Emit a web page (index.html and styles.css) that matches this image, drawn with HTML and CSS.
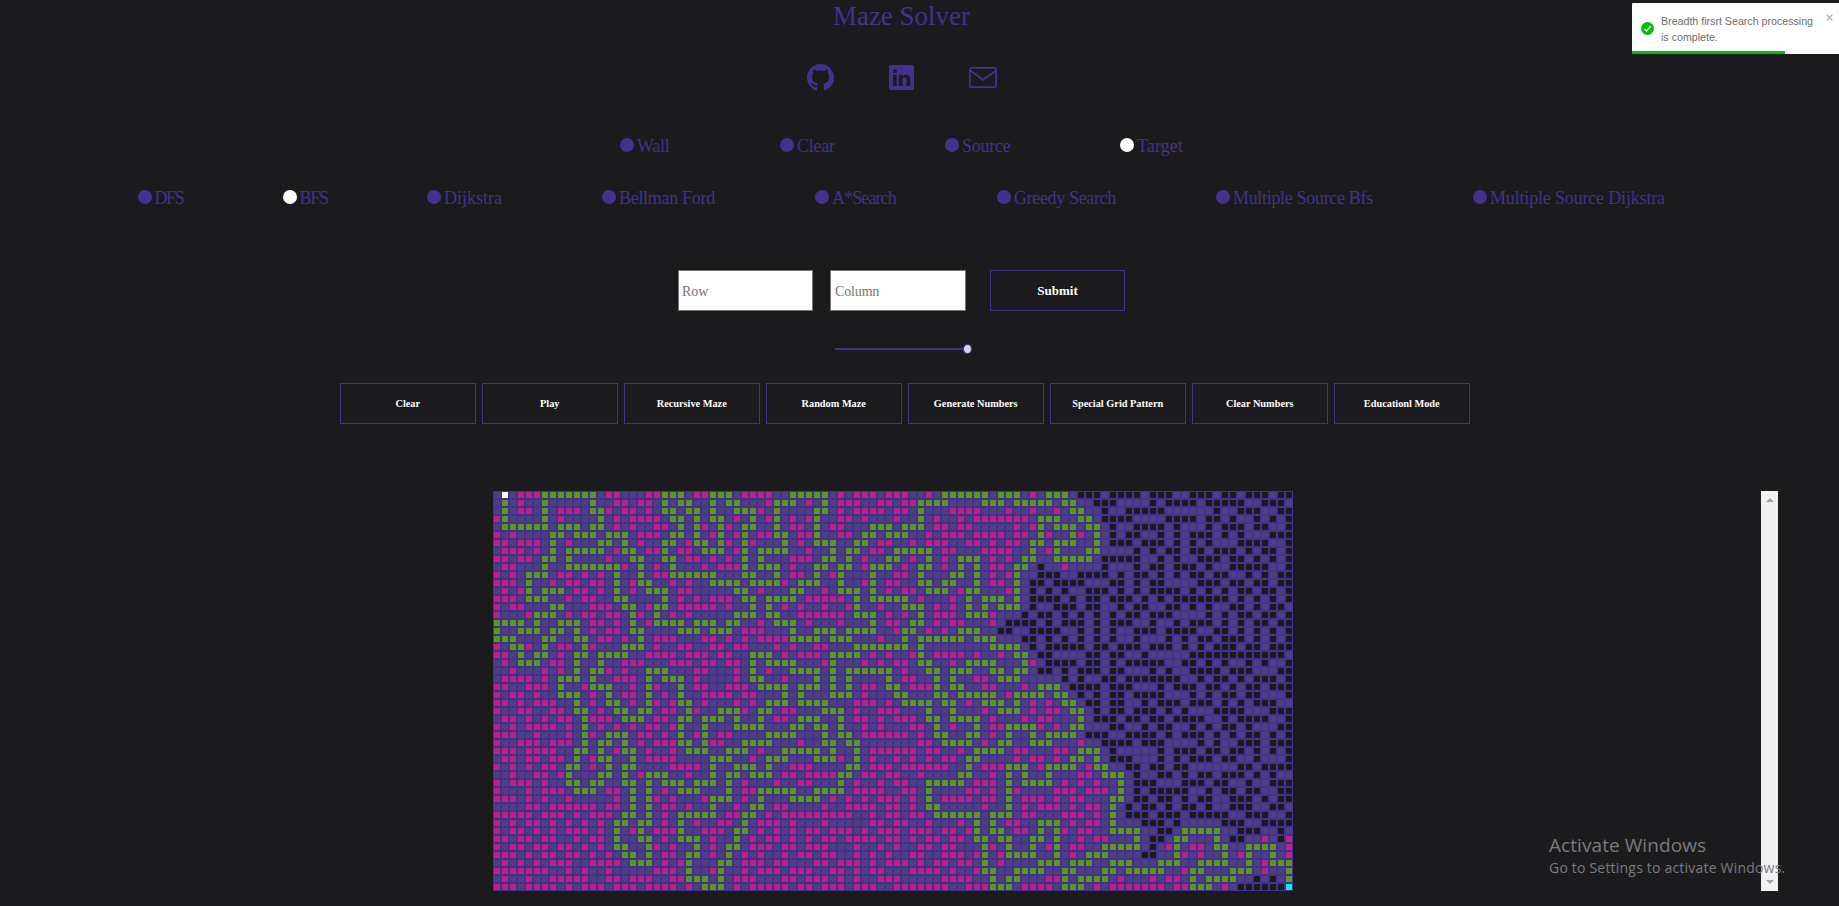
FILE: index.html
```html
<!DOCTYPE html>
<html lang="en">
<head>
<meta charset="utf-8">
<title>Maze Solver</title>
<link rel="stylesheet" href="styles.css">
</head>
<body>
<header class="header">
  <h1 class="title">Maze Solver</h1>
  <nav class="links">
    <a><svg class="icon github" viewBox="0 0 16 16"><path fill="currentColor" d="M8 0C3.58 0 0 3.58 0 8c0 3.54 2.29 6.53 5.47 7.59.4.07.55-.17.55-.38 0-.19-.01-.82-.01-1.49-2.01.37-2.53-.49-2.69-.94-.09-.23-.48-.94-.82-1.13-.28-.15-.68-.52-.01-.53.63-.01 1.08.58 1.23.82.72 1.21 1.87.87 2.33.66.07-.52.28-.87.51-1.07-1.78-.2-3.64-.89-3.64-3.95 0-.87.31-1.59.82-2.15-.08-.2-.36-1.02.08-2.12 0 0 .67-.21 2.2.82.64-.18 1.32-.27 2-.27s1.36.09 2 .27c1.53-1.04 2.2-.82 2.2-.82.44 1.1.16 1.92.08 2.12.51.56.82 1.27.82 2.15 0 3.07-1.87 3.75-3.65 3.95.29.25.54.73.54 1.48 0 1.07-.01 1.93-.01 2.2 0 .21.15.46.55.38A8.01 8.01 0 0 0 16 8c0-4.42-3.58-8-8-8z"/></svg></a>
    <a><svg class="icon linkedin" viewBox="0 0 16 16"><path fill="currentColor" d="M0 1.15C0 .51.53 0 1.18 0h13.64C15.47 0 16 .51 16 1.15v13.7c0 .63-.53 1.15-1.18 1.15H1.18C.53 16 0 15.48 0 14.85V1.15zm4.94 12.24V6.17h-2.4v7.22h2.4zM3.74 5.18c.84 0 1.36-.55 1.36-1.25-.02-.71-.52-1.25-1.34-1.25-.82 0-1.36.54-1.36 1.25 0 .7.52 1.25 1.33 1.25h.01zm4.91 8.21V9.36c0-.22.02-.43.08-.59.17-.43.57-.88 1.23-.88.87 0 1.22.66 1.22 1.64v3.86h2.4V9.25c0-2.22-1.18-3.25-2.76-3.25-1.28 0-1.85.7-2.17 1.19V6.17h-2.4c.03.68 0 7.22 0 7.22h2.4z"/></svg></a>
    <a><svg class="icon mail" viewBox="0 0 28 21"><g fill="none" stroke="currentColor" stroke-width="1.8"><rect x=".9" y=".9" width="26.2" height="19.2" rx="1.6"/><path d="M1.2 3.6 14 12.8 26.8 3.6"/></g></svg></a>
  </nav>
</header>

<div class="radios tools">
  <label class="radio"><i class="dot"></i><span>Wall</span></label>
  <label class="radio"><i class="dot"></i><span>Clear</span></label>
  <label class="radio"><i class="dot"></i><span>Source</span></label>
  <label class="radio"><i class="dot on"></i><span>Target</span></label>
</div>
<div class="radios algos">
  <label class="radio"><i class="dot"></i><span>DFS</span></label>
  <label class="radio"><i class="dot on"></i><span>BFS</span></label>
  <label class="radio"><i class="dot"></i><span>Dijkstra</span></label>
  <label class="radio"><i class="dot"></i><span>Bellman Ford</span></label>
  <label class="radio"><i class="dot"></i><span>A*Search</span></label>
  <label class="radio"><i class="dot"></i><span>Greedy Search</span></label>
  <label class="radio"><i class="dot"></i><span>Multiple Source Bfs</span></label>
  <label class="radio"><i class="dot"></i><span>Multiple Source Dijkstra</span></label>
</div>

<form class="size">
  <input class="field" placeholder="Row">
  <input class="field second" placeholder="Column">
  <button class="btn submit" type="button">Submit</button>
</form>
<div class="slider"><div class="track"></div><div class="thumb"></div></div>
<div class="actions">
  <button class="btn">Clear</button>
  <button class="btn">Play</button>
  <button class="btn">Recursive Maze</button>
  <button class="btn">Random Maze</button>
  <button class="btn">Generate Numbers</button>
  <button class="btn">Special Grid Pattern</button>
  <button class="btn">Clear Numbers</button>
  <button class="btn">Educationl Mode</button>
</div>

<main class="board">
  <div class="maze" id="maze"></div>
  <div class="scrollbar"><i class="up"></i><i class="down"></i></div>
</main>

<aside class="toast">
  <div class="toast-body">
    <svg class="check" viewBox="0 0 13 13"><circle cx="6.5" cy="6.5" r="6.5" fill="#07bc0c"/><path d="M3.4 6.9 5.6 9 9.7 4.2" fill="none" stroke="#fff" stroke-width="1.3"/></svg>
    <p class="message">Breadth firsrt Search processing<br>is complete.</p>
    <svg class="close" viewBox="0 0 7 7"><path d="M.6.6 6.4 6.4M6.4.6.6 6.4" stroke="#a5a5a5" stroke-width="1.1"/></svg>
  </div>
  <div class="progress"></div>
</aside>

<div class="watermark">
  <div class="wm-title">Activate Windows</div>
  <div class="wm-text">Go to Settings to activate Windows.</div>
</div>
<script src="maze.js"></script>
</body>
</html>
```

FILE: styles.css
```css
* { box-sizing: border-box; }
body {
  margin: 0;
  width: 1839px;
  height: 906px;
  overflow: hidden;
  background: #1b1b1d;
  color: #44318d;
  font-family: "Liberation Serif", serif;
  display: flex;
  flex-direction: column;
}
.header { display: flex; flex-direction: column; align-items: center; padding-right: 36px; }
.title { margin: 0; font-size: 27px; font-weight: 400; line-height: 32px; height: 32px; }
.links { display: flex; align-items: center; gap: 53px; height: 30px; margin-top: 30px; margin-bottom: 1px; }
.links a { display: flex; justify-content: center; width: 28px; }
.icon { display: block; }
.github { width: 27px; height: 27px; }
.linkedin { width: 25px; height: 25px; }
.mail { width: 28px; height: 21px; }

.radios { display: flex; height: 24px; }
.radio { display: flex; align-items: center; gap: 3px; font-size: 18px; line-height: 24px; white-space: nowrap; letter-spacing: -.25px; }
.dot { flex: none; width: 14px; height: 14px; border-radius: 50%; background: #44318d; position: relative; top: -1px; }
.dot.on { background: #fff; }
.tools { margin: 41px 0 0 620px; }
.tools .radio:nth-child(1) { width: 160px; }
.tools .radio:nth-child(2) { width: 165px; }
.tools .radio:nth-child(3) { width: 175px; }
.tools .radio:nth-child(4) { letter-spacing: .1px; }
.algos { margin: 28px 0 0 137.5px; }
.algos .radio:nth-child(1) { width: 145px; letter-spacing: -1.4px; }
.algos .radio:nth-child(2) { width: 144.5px; letter-spacing: -1.3px; }
.algos .radio:nth-child(3) { width: 175px; letter-spacing: 0; }
.algos .radio:nth-child(4) { width: 213px; letter-spacing: -.3px; }
.algos .radio:nth-child(5) { width: 182px; letter-spacing: -.9px; }
.algos .radio:nth-child(6) { width: 219px; letter-spacing: -.35px; }
.algos .radio:nth-child(7) { width: 257px; letter-spacing: -.32px; }
.algos .radio:nth-child(8) { letter-spacing: -.17px; }

.size { display: flex; margin: 60px 0 0 678px; height: 41px; }
.field {
  width: 135px;
  height: 41px;
  border: 1px solid #767676;
  border-radius: 0;
  padding: 3px 3px 0;
  font: 14px "Liberation Serif", serif;
  background: #fff;
}
.field::placeholder { color: #757575; }
.second { width: 136px; margin-left: 17px; padding-left: 4px; letter-spacing: -.15px; }
.btn {
  height: 41px;
  width: 135.5px;
  padding: 0;
  border: 1px solid #44318d;
  background: #1b1b1d;
  color: #fff;
  font: bold 10.3px "Liberation Serif", serif;
}
.submit { width: 135px; margin-left: 24px; font-size: 13px; }
.slider { display: flex; align-items: center; height: 12px; margin: 32px 0 0 835px; }
.track { width: 128px; height: 2px; background: #44318d; }
.thumb { width: 9px; height: 10px; border-radius: 50%; background: #d6d1e6; border: 1px solid #44318d; }
.actions { display: flex; gap: 6.5px; margin: 28px 0 0 340px; }

.board { display: flex; margin: 67px 0 0 493px; }
.maze { display: grid; grid-template-columns: repeat(100, 8px); grid-auto-rows: 8px; width: 800px; height: 400px; }
.cell { border: 1px solid #44318d; }
.wall { background: #4c4080; }
.seen { background: #b82383; }
.path { background: #58991b; }
.start { background: #fff; }
.goal { background: #00f6ff; }
.scrollbar {
  display: flex;
  flex-direction: column;
  justify-content: space-between;
  align-items: center;
  width: 17px;
  height: 400px;
  margin-left: 468px;
  padding: 7px 0;
  background: #f1f1f1;
}
.up, .down { border: 4px solid transparent; }
.up { border-top: 0; border-bottom-color: #a3a3a3; }
.down { border-bottom: 0; border-top-color: #a3a3a3; }

.toast { position: absolute; left: 1632px; top: 3px; width: 207px; height: 51px; background: #fff; border-radius: 1px 0 0 1px; }
.toast-body { display: flex; height: 48px; padding: 10px 6px 0 9px; }
.check { width: 13px; height: 13px; margin: 9px 7px 0 0; flex: none; }
.message { margin: 0; flex: 1; font: 10.65px/16px "Liberation Sans", sans-serif; color: #6c6c6c; white-space: nowrap; }
.close { width: 7px; height: 7px; margin-top: 1px; flex: none; }
.progress { width: 153px; height: 3px; background: #07bc0c; }

.watermark { position: absolute; left: 1549px; top: 832px; color: #7c7c7d; font-family: "Open Sans", sans-serif; white-space: nowrap; }
.wm-title { font-size: 19px; line-height: 26px; letter-spacing: .07px; }
.wm-text { font-size: 14px; line-height: 20px; letter-spacing: .2px; }
```

FILE: maze.js
```js
// Four column blocks of 25 cells per row.
// S start, T target, G path, P visited, K open, . wall
const rows = `
.S.PPPGGGGGGG.PP...PPGGG. PPGGG.PPPP..GGGGG.P.PPP.P PP..P.GGGGGG.GGG.P.GGG.KK K.KKKK.KKK..KKK.KK.KKK.KK
.G.P..G.....G..PP.PP.G.GG ..G.GG...PGGG.P.G.PPP..PP .PPGGGG....GGG.GGGGG.GG.. KKK....K.KKKK.KKKKK..KKK.
.G.PP.G.PPP.GGP.PP.P.GG.G G.G..GGGP.G....GG.P.PPPP. PP.G...PPPP...P..P..P.GG. .K..KKKKK......K..KKK..KK
PG....G.P....G.P.PPPP.GG. G.GG.P.G.PG.P.PG..PP.P... P..G.P..P.PPPPPPP.GGG..GG .KKKK....KKKK.KK.K..K.K.K
.GGGGGG.GGG.GG.P.P..PP.G. GP.GP.GG..G.PP.G.PP...GGG .GGG.PP.PP.....P.PG.GGG.G G.K..KKKK.K...K.KKK.KK..K
P.P....GG.GGG.GGG.PPP.GG. G.PG.PG.PPGG.PPG..PP.GG.G GG..P.PPP.PPPP.PP.GP..GP. G.K.KK..K.K.KKK.K.K...KKK
PP.PPP.G.P...GG.G.P..GG.P GG.GP.GP...G.P.GGG..GG.PP ..P.PPP..PP.P.PP.GG.GGG.. G.KKK.KKK.K.K.K...KKKK..K
.PPP.P.G.GGGGG.PGG.PPG.PP .GGG.PG.GGGG..P..G.GG.PP. GGGGG.PP...PPPP..G.PG...G G....K.K.KK.KK.KKK.K.KK.K
PP.PP.GG.G....P..GG..GG.P P.P.P.G.G...PPP.GG.G.P..G G.P.G.P.GGG.P.P.GG..GGGGG .KKKKK..K.K..KKK.KK.K.K.K
.PP...G..GGGGGGGP.G.P.G.. .P.PPPG.GGG.P..GG.GG.PGGG .P.GG.P.G.G.PP.GG.K..P... .K...K.KK.KKK.K..KKKKK..K
P.P.GGG.PP.P.P.G..G.PPGGG GGG...GG..G.PP.G.PG...G.. PP.G...GG.G.P.PG..KKK..KK KK.K.KK.K.K.KK.KK..K.K.KK
PPP.G..P.PP.PP.G.PGG..P.P ..GGGG.GGGGP.GGG..G..PG.P P..GG.GG..G.PP.G.KK.KKKK. ..KK.K.KK....KKK.KK.KK.KK
.P.PG.GGG.PP.P.G.P.GGG.PP .....GG.P...GG..P.GGG.G.P .PP.GGG.PGG...PG.K.K.K..K KK.K.K.KKKK.K.K.K.KK.KK.K
PPP.GGG..P.PP..GG....G.P. P.PPP.GG.GGGG.PPPPP.G.GGG GG.P...P.G.GGG.G.KKKK.K.K K.KKK.K.K.KKKKKKK.K.K.K.K
P.PP...GG...PPP.GG.PGG.PP PPP.P..G.G.P.P..P..PG..P. .GGG.P.P.G.G.GGG.K..KKK.K K..K.KK..KK.K.K..KK.K.KK.
P...PGGG.P.PP.PP.GP.G.P.P .....GGG.GG..PPPPPP.GGG.P .P.G.PPP.GGGP...K.KK.K.K. K.K.KK.KKK....K.K.KK.KK.K
GGGG.G..GGG.PP.P.G.PGGGG. GGG.GG..P.GGG.P...P...G.P P.GG.P.PP...P.KKKK.K.KKK. K.KKK..K..K.KKK.K.K.KK.KK
G..GGG.GG.G.P.PP.GG....GG G.GGG.PPP...G..GGG.GGGG.. PGG.P.P.GGG..KK..KKKK..K. K.K..KKK.KKKK..KK.K.K.K.K
GGG...GG..GG.PP.P.G.PPP.. .PP.P.P.PPPPGGGG.GGG...P. .G.GGGGGG.GGG...KK.K.K.K. K.K..K...K.K.KK.KKK.K.K.K
P.GGP.G.PP.GP...GGG.P..PP ..PP.PP...P.P..PP...GGGGG GG.G........GGGG.K.KKKKK. KK.KKK.KKK.K.K.KKK.KK.KKK
PP.G.GG.P.GG.GGGG..PPPP.P PP.PP..GGG.P.PPP.GGGG.P.P ..PG.PPPP.P..P.GG.KK....K K.KK..K.....KKKKKKKKKKKK.
.P.GGG.PP.G..G..PPP...PPP .PP.PP.G.GGGG...PG...P.P. PP.GG..P.GGGG...GP.KKKK.K K.K.KKKKK..KK.K.K..K.K..K
..P...P.P.G.GGP.P..GGG... PP...P.G.P..GGGG.G.GGGGGG .P..GG.GGG..GG.GG.KK.K.KK K.KK...K.K..KKKK.KKK...KK
.PPPP.P.GGG.G..PPP.G.GGG. P....P.GG..P...G.G.G....G .PP..G.G..PP.GGG.....K.K. .KK.KKKKKKK..K.KK.K.KKK.K
PP..PPP.G..PGGG..P.GP..G. PP..PPP.GGGG.GGG.G.G.PP.G G.PPPG.GG..PP...P.GGG.KKK K.KKK...K.KKK.KK.K.KK.KKK
P.PP.P..GGG.P.G.PP.G.P.G. .PPPP.PP...G.G...GGG.P... GG...GG.GGGGG.PGGGG.GG.K. K.KK.KKKK...K.K.KK.KK...K
PP.P.PPP..G.P.GG.P.GP.PGG .P...P.P.GGG.GGGG...PPP.P .GGGG.GG.P.GGG.G.P.P.GG.K K.KK..K.KKK.KKK.K.K.KKK..
P..PP..PP.GG.P.GG.GG.PP.G P..GGGP.GG.PP...GGG.P..PP P...G..G...P.GGG.P.PP.GG. K.KK.KKK.K.K...KKKK...KKK
.PP.P.P.PP.GPPP.GGG.PP.GG .GGG.G..G.PP.GGG..G.PP.P. PPP.GG.GGGG.P...P.PP...G. KKK.KK.KK.KKKK..K.KKKK..K
P.P.PPPP.P.G.P.P.P.PP.PG. .G...GGGG...GG.GG.G..P.P. ..PP.G.P..G.PPGGGGP.P.GG. ..KK..K.KK..K.K.KK.K...KK
PPP..P...P.GP.GGG.PP.P.G. PG.PP....GGGG...G.GG.PPPP PP.P.GG..GG.P.G..G.GGGG.K KK..KKKK.K.KKK.K.K.KK.K.K
P..PPP.PPP.G.GG.G.P.PPPGG .GPP..GGGG...P..GG.GG.... ...PP.GGGG.P.GG..GGG...P. .KKKK.KKK....K.K..KKK.KKK
PPP.PPPP..GG.G.PGG.P..P.G GG..GGG.P..GGGGG.G..G.PPP PPP.PP..P.GGGG.PP...PP.GG G.K.....K.KKK.KK.KK.K.K.K
.PP.PP.PP.G.PGG..G.PPPP.. ..GGG..P.GGG...GGGP.G.P.. P.P.P.PP.GG....P.PP.P.GG. G.KKK...K.K.KKK.KK..K...K
P.P.P.PP.GG.P.G.GG....PPP P.G..GGG.G..PPP....GG.PPP .PPPPPP..G.PPPGGG.PGGGG.P GG..KK.KK.KK......KK.KKKK
..P..PP.PG...GG.G.PGGG..P ..G.GG.GGG.PP.PPPPGG.PP.P P..P....GG..P.G.G..G...PP .GGG.K..KK.K.KK.KKK.K.K..
P.PPP.P..GG.GG..GG.G.GGG. GGG.G.P...P..PP...G.P..P. PP..GGGGG.PPP.G.GGGG.P.P. P..G.KKK...KKK.KK..K..KKK
P...P.PPP.GGG.PP.G.G.P.GG G...G.PPGGGGG..GGGG.PPPP. .PP.G....PP.P.GP....PPP.P PP.G.K.KKKKK..K.KK.KK..KK
PPP.P.P..P.....P.G.GP.P.. .PGGG.P.G...GGGG.P.P.P.PP P.P.G.PPPP.PP.G.PPP.P.PP. ..GG.KK.KK.K.KK..KKK.K.KK
....PP.PPPPPP.PP.G.G.PP.P ..G..P.GG.PP....P..PPPP.P P.P.GG.....P..G.P.PPP.P.P P.G.K.KK.K.KK.K..KKK..KK.
PPPPP.PPP.P.PPP.GG.G.P.GG GGG.PPGG.P.PPPPPPPPP..P.P P.PP.GGGGGG.GGG.PP...PPP. P.G.KKK.KKK.KKKKK..KKK..K
P.P.PP.P.P.P.P.GG.GG.P.G. P..PP.G.PPP.P...P.....PP. PP..P...P.G.G.PP..GGG.P.P P.G...KKK.K.....KKK..KKKK
P.PP.P.P.PPP.P.G.PG.PPPG. .PPP.GG.P.P.P.PP.PPP.P.PP P.PPP.PP.PG.GG.PP.G.GP.PP ..GGGG..KK.GGGGG..KKK..K.
PP.PP.PP..P.PP.G..GG.P.GG G.P..G.P.PP.P.P.PP.PPPP.P P.P.PP.PP.GG.GG..GG.G..P. PP...G.KK.GG...G.KK..P.KP
P.PP.PP.PP.P.P.GG..GP.P.. G.P.GG.PPP.PP.PPP...P..P. P..PP.PP...GP.G..G.PG.PP. .GGGGG.K.PG.PP.GG..GGGG.P
PPP.P.PP.PP.P.P.GG.G.PP.G G.P.G.P.P..P.PP.PP..P.P.P ..PP..PPP.PG.PGGGG..G.P.G GG....KK..GP.P..G.PG..G.P
.P.P.P.PPP..PPPP.GGG.P.PG ...GG.PPP.PP...PP.PPP.P.P PP.P.PP.PP.G.P....GGG.GGG ..GGG...GGG..GGGG..G.PGGG
PPPPPPP..P.P..P.....PPP.G ..PG..P.PPP.PPP..PP.P.PP. ..PPPP.P..PGG..GGGG..GG.. .GG.GGGGG..PGG...GGG.P..G
.P..P..PPPPP..PP.PPP..PPG GG.G.PPP...PP.PPP.P.P..PP P.....PPPP..G.GG...PPG.GG GG.P...P.PP.G.GGGG..K.K.G
PPP.PPPP.P.PPP.PPP.PPPP.P .GGG.P.PPPPP.PP.PPP.PPP.. PPPPPPP..PPPGGG.PPPP.GGG. P.PPPPPPP.PPGGG.P.KKKKKKT`;

const kinds = { ".": "wall", P: "seen", G: "path", K: "open", S: "start", T: "goal" };
const maze = document.getElementById("maze");
for (const row of rows.trim().split("\n")) {
  for (const mark of row.replaceAll(" ", "").slice(0, 100).padEnd(100, ".")) {
    const cell = document.createElement("div");
    cell.className = "cell " + kinds[mark];
    maze.append(cell);
  }
}
```
